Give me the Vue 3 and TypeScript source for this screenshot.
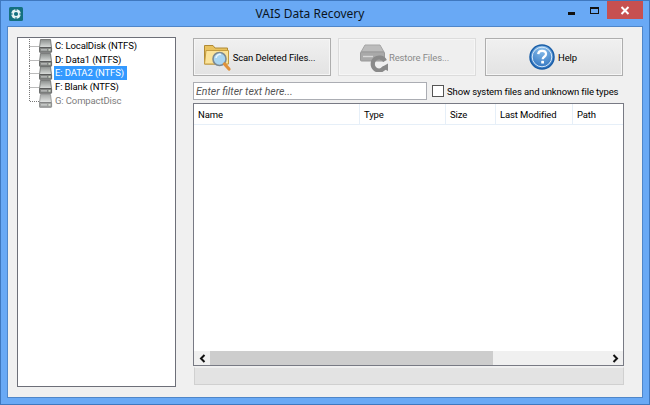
<script setup lang="ts">
interface Drive { label: string; selected?: boolean; disabled?: boolean; last?: boolean }
const drives: Drive[] = [
  { label: 'C: LocalDisk (NTFS)' },
  { label: 'D: Data1 (NTFS)' },
  { label: 'E: DATA2 (NTFS)', selected: true },
  { label: 'F: Blank (NTFS)' },
  { label: 'G: CompactDisc', disabled: true, last: true },
]
const columns = [
  { name: 'Name', width: 166 },
  { name: 'Type', width: 86 },
  { name: 'Size', width: 50 },
  { name: 'Last Modified', width: 77 },
  { name: 'Path', width: 50 },
]
</script>

<template>
  <div class="window">
    <header class="titlebar">
      <svg class="app-icon" width="14" height="14" viewBox="0 0 14 14">
        <rect width="14" height="14" rx="1.5" fill="#14707f" />
        <circle cx="7" cy="7" r="4.8" fill="#e8f4f6" />
        <circle cx="7" cy="7" r="2.1" fill="#14707f" />
        <path d="M7 1.5 8.2 3.4H5.8ZM7 12.5 5.8 10.6H8.2ZM1.5 7 3.4 5.8V8.2ZM12.5 7 10.6 8.2V5.8Z" fill="#14707f" />
      </svg>
      <h1 class="title">VAIS Data Recovery</h1>
      <div class="controls">
        <span class="minimize"></span>
        <span class="maximize"></span>
        <span class="close">
          <svg width="10" height="9" viewBox="0 0 10 9"><path d="M1.5 1 8.5 8M8.5 1 1.5 8" stroke="#fff" stroke-width="2" /></svg>
        </span>
      </div>
    </header>

    <main class="client">
      <aside class="tree">
        <div v-for="d in drives" :key="d.label" class="node">
          <svg class="connector" width="10" height="14" viewBox="0 0 10 14">
            <path :d="d.last ? 'M.5 0V7.5H10' : 'M.5 0V14M.5 7.5H10'" stroke="#777" stroke-dasharray="1 1" fill="none" />
          </svg>
          <svg class="drive" :class="{ 'drive-off': d.disabled }" width="14" height="14" viewBox="0 0 14 14">
            <defs>
              <linearGradient id="hdd" x1="0" y1="0" x2="0" y2="1">
                <stop offset="0" stop-color="#8a8e8c" />
                <stop offset="1" stop-color="#dcdfdd" />
              </linearGradient>
            </defs>
            <path d="M1.5.5H11.5L12.5 8.5H.5Z" fill="url(#hdd)" stroke="#6a6c6b" stroke-width=".8" />
            <rect x=".4" y="8.5" width="12.2" height="4.8" rx=".6" fill="#838684" stroke="#4f5150" stroke-width=".8" />
            <path d="M2 10.9H8" stroke="#cfd2d0" stroke-width="1" />
            <rect x="9.5" y="10.2" width="2" height="1.4" fill="#dfe8d6" />
          </svg>
          <span class="label" :class="{ selected: d.selected, disabled: d.disabled }">{{ d.label }}</span>
        </div>
      </aside>

      <section class="panel">
        <div class="toolbar">
          <button class="btn btn-wide" type="button">
            <svg width="30" height="30" viewBox="0 0 30 30">
              <path d="M1.5 3.5H10L12 6H24.5V22H1.5Z" fill="#e9c25e" stroke="#b08a35" />
              <path d="M1.5 22 3 8.5H25.5V22Z" fill="#fbe39a" stroke="#c49c41" />
              <circle cx="16.5" cy="17" r="6.5" fill="#a9d5f2" stroke="#7d8a92" stroke-width="1.6" />
              <path d="M13 16a4 4 0 0 1 5-3.5" stroke="#eaf6fd" stroke-width="1.5" fill="none" />
              <path d="M21.5 22 26 27" stroke="#e0913a" stroke-width="3.2" stroke-linecap="round" />
            </svg>
            <span>Scan Deleted Files...</span>
          </button>
          <button class="btn btn-wide btn-off" type="button" disabled>
            <svg width="30" height="30" viewBox="0 0 30 30">
              <path d="M6 3H21L25 10H2Z" fill="#bcbcbc" stroke="#a5a5a5" />
              <rect x="1.5" y="10" width="24" height="9" rx="1" fill="#a9a9a9" stroke="#999" />
              <path d="M4 14.5H14" stroke="#d8d8d8" stroke-width="1.4" />
              <path d="M26 19A6.5 6.5 0 1 0 26 25" stroke="#8a8a8a" stroke-width="4.2" fill="none" />
              <path d="M22 25.5 29 29V21.5Z" fill="#8a8a8a" />
            </svg>
            <span>Restore Files...</span>
          </button>
          <button class="btn btn-help" type="button">
            <svg width="26" height="26" viewBox="0 0 26 26">
              <defs>
                <radialGradient id="orb" cx=".5" cy=".2" r=".9">
                  <stop offset="0" stop-color="#8cc0ec" />
                  <stop offset="1" stop-color="#1f66b8" />
                </radialGradient>
              </defs>
              <circle cx="13" cy="13" r="12" fill="url(#orb)" stroke="#1b5fa8" stroke-width="1.5" />
              <circle cx="13" cy="13" r="9.8" fill="none" stroke="#d8e9f8" stroke-width="1" />
              <path d="M9.2 10.2C9.4 7.8 11 6.8 13.1 6.8c2.3 0 3.9 1.3 3.9 3.2 0 2.8-3.3 2.7-3.3 5.3" stroke="#fff" stroke-width="2.3" fill="none" />
              <rect x="12.2" y="16.8" width="2.8" height="2.8" rx=".6" fill="#fff" />
            </svg>
            <span>Help</span>
          </button>
        </div>

        <div class="filter-row">
          <input class="filter" type="text" placeholder="Enter filter text here..." />
          <label class="check">
            <span class="box"></span>
            <span>Show system files and unknown file types</span>
          </label>
        </div>

        <div class="table">
          <div class="thead">
            <div v-for="c in columns" :key="c.name" class="th" :style="{ width: c.width + 'px' }">{{ c.name }}</div>
          </div>
          <div class="tbody"></div>
          <div class="hscroll">
            <span class="arrow">
              <svg width="7" height="9" viewBox="0 0 7 9"><path d="M5.5 1 2 4.5 5.5 8" stroke="#111" stroke-width="2" fill="none" /></svg>
            </span>
            <div class="track"><div class="thumb"></div></div>
            <span class="arrow">
              <svg width="7" height="9" viewBox="0 0 7 9"><path d="M1.5 1 5 4.5 1.5 8" stroke="#111" stroke-width="2" fill="none" /></svg>
            </span>
          </div>
        </div>

        <div class="status"></div>
      </section>
    </main>
  </div>
</template>

<style>
html, body { margin: 0; padding: 0; background: #69a9f5; }
</style>

<style scoped>
.window {
  width: 650px;
  height: 405px;
  box-sizing: border-box;
  display: flex;
  flex-direction: column;
  background: #69a9f5;
  border: 1px solid #3f78bf;
  padding: 0 6px 6px;
  font-family: Roboto, "Noto Sans", sans-serif;
  font-size: 9.5px;
  letter-spacing: -0.12px;
  color: #000;
}
.titlebar {
  height: 25px;
  flex: none;
  display: flex;
  align-items: flex-start;
  position: relative;
}
.app-icon { margin: 6px 0 0 2px; }
.title {
  flex: 1;
  margin: 0;
  padding: 4px 0 0 36px;
  text-align: center;
  font-family: "Noto Sans", sans-serif;
  font-size: 12px;
  letter-spacing: 0;
  line-height: 18px;
  font-weight: 400;
  color: #0b1522;
}
.controls {
  width: 82px;
  height: 18px;
  display: flex;
  align-items: flex-start;
}
.minimize {
  width: 7px;
  height: 3px;
  background: #111;
  margin: 11px 0 0 7px;
}
.maximize {
  width: 9px;
  height: 7px;
  box-sizing: border-box;
  border: 1px solid #111;
  border-top-width: 2px;
  margin: 6px 0 0 15px;
}
.close {
  width: 36px;
  height: 18px;
  margin-left: 8px;
  background: #c75050;
  display: flex;
  align-items: center;
  justify-content: center;
}
.client {
  flex: 1;
  min-height: 0;
  display: flex;
  background: #f0f0f0;
  border: 1px solid #4f86c9;
  padding: 10px 19px 10px 9px;
}
.tree {
  width: 159px;
  box-sizing: border-box;
  flex: none;
  background: #fff;
  border: 1px solid #6d6f78;
  padding: 1px 0 0 11px;
}
.node {
  height: 13.75px;
  display: flex;
  align-items: center;
  white-space: nowrap;
}
.connector { flex: none; }
.drive { flex: none; margin-right: 1px; }
.drive-off { opacity: .75; }
.label {
  padding: 0 3px 0 1px;
  line-height: 14px;
  height: 14px;
}
.label.selected { background: #3399ff; color: #fff; }
.label.disabled { color: #7c7c7c; }
.panel {
  flex: 1;
  min-width: 0;
  margin-left: 17px;
  display: flex;
  flex-direction: column;
  padding-top: 1px;
}
.toolbar {
  display: flex;
  gap: 7px;
}
.btn {
  width: 138px;
  height: 38px;
  box-sizing: border-box;
  border: 1px solid #aeaeae;
  box-shadow: inset 0 0 0 1px #f6f6f6;
  background: linear-gradient(#f0f0f0, #e3e3e3);
  padding: 0;
  display: flex;
  align-items: center;
  justify-content: center;
  font: inherit;
  letter-spacing: inherit;
  color: #000;
}
.btn svg { flex: none; }
.btn-wide { padding-right: 6px; }
.btn-off {
  background: #efefef;
  border-color: #dcdcdc;
  color: #8a8a8a;
}
.btn-help { margin-left: 2px; gap: 3px; padding-right: 2px; }
.filter-row {
  margin-top: 6px;
  display: flex;
  align-items: center;
  height: 18px;
}
.filter {
  width: 234px;
  flex: none;
  height: 18px;
  box-sizing: border-box;
  border: 1px solid #abadb3;
  background: #fff;
  padding: 0 2px;
  font: inherit;
  font-size: 10.5px;
  letter-spacing: 0;
  font-style: italic;
  outline: none;
}
.filter::placeholder { color: #555; opacity: 1; }
.check {
  display: flex;
  align-items: center;
  margin-left: 5px;
  gap: 3px;
  white-space: nowrap;
}
.box {
  width: 12px;
  height: 12px;
  box-sizing: border-box;
  border: 1px solid #555;
  background: #fff;
}
.table {
  margin-top: 3px;
  width: 431px;
  height: 263px;
  box-sizing: border-box;
  border: 1px solid #787a84;
  background: #fff;
  display: flex;
  flex-direction: column;
}
.thead {
  display: flex;
  height: 20px;
  flex: none;
  border-bottom: 1px solid #e6eff8;
}
.th {
  box-sizing: border-box;
  border-right: 1px solid #e6eff8;
  padding-left: 4px;
  line-height: 21px;
  flex: none;
}
.th:last-child { border-right: 0; }
.tbody { flex: 1; }
.hscroll {
  height: 14px;
  flex: none;
  display: flex;
  background: #f0f0f0;
}
.arrow {
  width: 16px;
  flex: none;
  display: flex;
  align-items: center;
  justify-content: center;
}
.track { flex: 1; }
.thumb { width: 71.4%; height: 100%; background: #cdcdcd; }
.status {
  margin: 1px 0 0 1px;
  width: 430px;
  height: 18px;
  box-sizing: border-box;
  background: #e3e3e3;
  border: 1px solid #d0d0d0;
  border-top-color: #efefef;
}
</style>
